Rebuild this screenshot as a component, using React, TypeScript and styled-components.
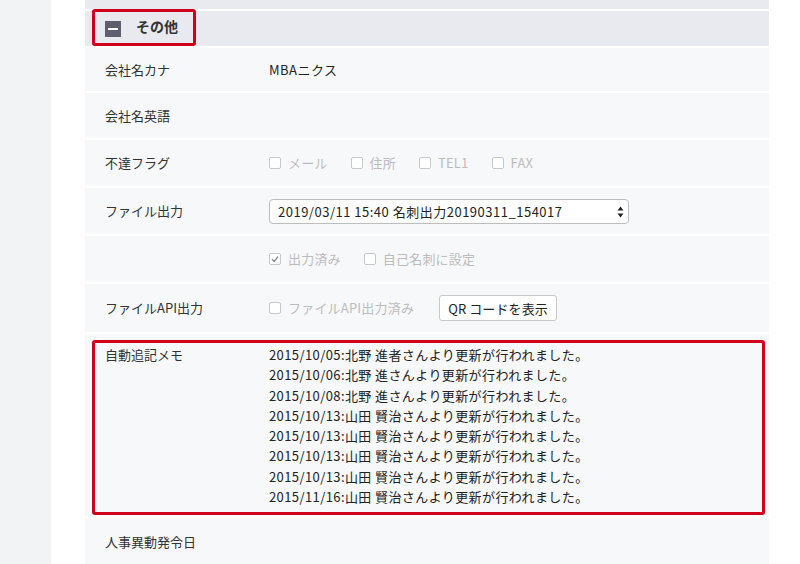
import React from 'react';
import styled, { createGlobalStyle } from 'styled-components';

const GlobalStyle = createGlobalStyle`
    html, body {
        margin: 0;
        padding: 0;
        background: #ffffff;
        font-family: "Noto Sans CJK JP", "Noto Sans", "Liberation Sans", sans-serif;
        color: #333333;
    }
    #root {
        height: 564px;
        overflow: hidden;
    }
`;

const memoLines = [
    '2015/10/05:北野 進者さんより更新が行われました。',
    '2015/10/06:北野 進さんより更新が行われました。',
    '2015/10/08:北野 進さんより更新が行われました。',
    '2015/10/13:山田 賢治さんより更新が行われました。',
    '2015/10/13:山田 賢治さんより更新が行われました。',
    '2015/10/13:山田 賢治さんより更新が行われました。',
    '2015/10/13:山田 賢治さんより更新が行われました。',
    '2015/11/16:山田 賢治さんより更新が行われました。',
];

const Check: React.FC<{ checked?: boolean; label: string }> = ({ checked, label }) => (
    <CheckItem>
        <CheckBox>
            {checked && (
                <svg width="10" height="10" viewBox="0 0 10 10">
                    <path d="M2 5.2 L4.2 7.4 L8 2.6" fill="none" stroke="#8a8a8a" strokeWidth="1.4" />
                </svg>
            )}
        </CheckBox>
        {label}
    </CheckItem>
);

const App: React.FC = () => {
    return (
        <>
            <GlobalStyle />
            <Page>
                <Sidebar />
                <Main>
                    <Panel>
                        <SectionHeader>
                            <ToggleIcon />
                        </SectionHeader>
                        <SectionHeader>
                            <ToggleIcon />
                            <HeaderTitle>その他</HeaderTitle>
                            <HeaderMark />
                        </SectionHeader>

                        <Row h={43}>
                            <Label>会社名カナ</Label>
                            <Value>MBAニクス</Value>
                        </Row>
                        <Row h={45}>
                            <Label>会社名英語</Label>
                            <Value />
                        </Row>
                        <Row h={46}>
                            <Label>不達フラグ</Label>
                            <Checks>
                                <Check label="メール" />
                                <Check label="住所" />
                                <Check label="TEL1" />
                                <Check label="FAX" />
                            </Checks>
                        </Row>
                        <Row h={46}>
                            <Label>ファイル出力</Label>
                            <SelectWrap>
                                <Select defaultValue="a">
                                    <option value="a">2019/03/11 15:40 名刺出力20190311_154017</option>
                                </Select>
                                <SelectArrows width="7" height="12" viewBox="0 0 7 12">
                                    <path d="M3.5 0.5 L6.5 4.5 L0.5 4.5 Z" fill="#222" />
                                    <path d="M3.5 11.5 L6.5 7.5 L0.5 7.5 Z" fill="#222" />
                                </SelectArrows>
                            </SelectWrap>
                        </Row>
                        <Row h={46}>
                            <Label />
                            <Checks>
                                <Check checked label="出力済み" />
                                <Check label="自己名刺に設定" />
                            </Checks>
                        </Row>
                        <Row h={48}>
                            <Label>ファイルAPI出力</Label>
                            <Checks>
                                <Check label="ファイルAPI出力済み" />
                                <Button>QR コードを表示</Button>
                            </Checks>
                        </Row>
                        <MemoRow>
                            <Label>自動追記メモ</Label>
                            <MemoList>
                                {memoLines.map((line, i) => (
                                    <MemoLine key={i}>{line}</MemoLine>
                                ))}
                            </MemoList>
                            <MemoMark />
                        </MemoRow>
                        <Row h={48}>
                            <Label>人事異動発令日</Label>
                            <Value />
                        </Row>
                    </Panel>
                </Main>
            </Page>
        </>
    );
};

const Page = styled.div`
    display: flex;
    min-height: 564px;
`;

const Sidebar = styled.div`
    width: 51px;
    flex-shrink: 0;
    background: #f2f3f5;
`;

const Main = styled.div`
    padding-left: 34px;
    width: 684px;
`;

const Panel = styled.div`
    display: flex;
    flex-direction: column;
    gap: 2px;
    margin-top: -26px;
`;

const SectionHeader = styled.div`
    position: relative;
    height: 35px;
    background: #e9eaef;
    display: flex;
    align-items: center;
    gap: 15px;
    padding-left: 20px;
`;

const ToggleIcon = styled.span`
    width: 16px;
    height: 16px;
    background: #5f5e6e;
    position: relative;
    &::after {
        content: '';
        position: absolute;
        left: 3px;
        right: 3px;
        top: 7px;
        height: 2px;
        background: #ffffff;
    }
`;

const HeaderTitle = styled.span`
    font-size: 14px;
    font-weight: 700;
    color: #333;
    line-height: 20px;
    padding-bottom: 5px;
`;

const HeaderMark = styled.span`
    position: absolute;
    left: 7px;
    top: -2px;
    width: 98px;
    height: 31px;
    border: 3px solid #d0021b;
    border-radius: 3px;
`;

const Row = styled.div<{ h: number }>`
    height: ${({ h }) => h}px;
    background: #f7f8fa;
    display: grid;
    grid-template-columns: 164px 1fr;
    align-items: center;
    padding-left: 20px;
    font-size: 13px;
    line-height: 20px;
`;

const Label = styled.div`
    color: #333;
    font-size: 13px;
`;

const Value = styled.div`
    color: #222;
    font-size: 13px;
    letter-spacing: 0.5px;
`;

const Checks = styled.div`
    display: flex;
    align-items: center;
    gap: 23px;
`;

const CheckItem = styled.span`
    display: inline-flex;
    align-items: center;
    gap: 7px;
    color: #bcbcbc;
    font-size: 13px;
    letter-spacing: 0.2px;
`;

const CheckBox = styled.span`
    width: 10px;
    height: 10px;
    border: 1px solid #c8c8c8;
    border-radius: 2px;
    background: #fff;
    display: inline-flex;
    align-items: center;
    justify-content: center;
`;

const SelectWrap = styled.div`
    position: relative;
    width: 360px;
    height: 25px;
`;

const Select = styled.select`
    appearance: none;
    width: 100%;
    height: 100%;
    border: 1px solid #bdbdbd;
    border-radius: 4px;
    background: #ffffff;
    font-family: "Noto Sans CJK JP", "Noto Sans", "Liberation Sans", sans-serif;
    font-size: 13px;
    letter-spacing: 0.5px;
    color: #222;
    padding: 0 8px;
    outline: none;
`;

const SelectArrows = styled.svg`
    position: absolute;
    right: 5px;
    top: 7px;
    pointer-events: none;
`;

const Button = styled.button`
    height: 26px;
    padding: 0 8px;
    border: 1px solid #c8c8c8;
    border-radius: 3px;
    background: #ffffff;
    font-family: "Noto Sans CJK JP", "Noto Sans", "Liberation Sans", sans-serif;
    font-size: 13px;
    letter-spacing: 0.1px;
    color: #222;
    margin-left: 2px;
`;

const MemoRow = styled.div`
    position: relative;
    background: #f7f8fa;
    display: grid;
    grid-template-columns: 164px 1fr;
    align-items: start;
    padding: 11px 0 9px 20px;
    font-size: 13px;
    line-height: 20.3px;
`;

const MemoList = styled.div`
    display: flex;
    flex-direction: column;
`;

const MemoLine = styled.div`
    color: #222;
    font-size: 13px;
    line-height: 20.3px;
    letter-spacing: 0.4px;
`;

const MemoMark = styled.span`
    position: absolute;
    left: 7px;
    right: 4px;
    top: 6px;
    bottom: 1px;
    border: 3px solid #d0021b;
    border-radius: 3px;
`;

export default App;
